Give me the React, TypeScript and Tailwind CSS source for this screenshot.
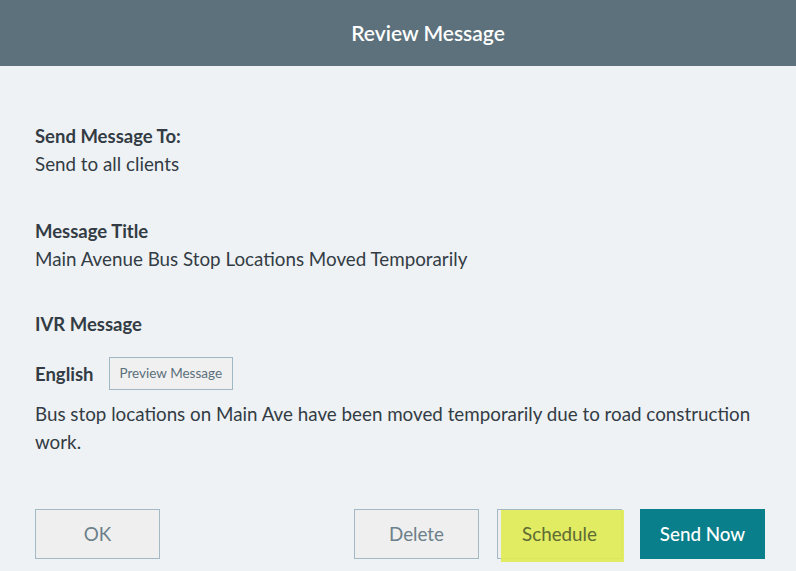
export default function App() {
  return (
    <div className="h-[571px] w-[796px] overflow-hidden bg-[#eef2f5] font-['Lato',sans-serif] text-[#333c44]">
      <header className="flex h-[66px] items-center justify-center bg-[#5c717b] pl-[60px]">
        <h1 className="text-[21px] font-semibold text-white">Review Message</h1>
      </header>

      <div className="pl-[35px] pr-[31px] pt-[56px]">
        <Field label="Send Message To:" value="Send to all clients" />
        <div className="mt-[39px]">
          <Field label="Message Title" value="Main Avenue Bus Stop Locations Moved Temporarily" />
        </div>

        <p className="mt-[37px] text-[18.5px] font-bold leading-[28px]">IVR Message</p>

        <div className="mt-[19px] flex items-center gap-[15px]">
          <span className="text-[18.5px] font-bold leading-[28px]">English</span>
          <button className="h-[33px] border border-[#9fb8c4] bg-[#f0f0f0] px-[10px] text-[13.5px] text-[#5a6f7a]">
            Preview Message
          </button>
        </div>

        <p className="mt-[10px] text-[18.8px] leading-[28px]">
          Bus stop locations on Main Ave have been moved temporarily due to road construction work.
        </p>

        <div className="mt-[53px] flex items-start">
          <ActionButton label="OK" />
          <div className="ml-auto flex gap-[18px]">
            <ActionButton label="Delete" />
            <div className="relative">
              <ActionButton label="Schedule" />
              <div className="pointer-events-none absolute left-[4px] top-[1px] h-[52px] w-[123px] bg-[#dfeb52]/90" />
              <span className="pointer-events-none absolute left-0 top-0 flex h-[50px] w-[125px] items-center justify-center text-[18.8px] text-[#5f6c35]">
                Schedule
              </span>
            </div>
            <button className="h-[50px] w-[125px] bg-[#087f8a] text-[18.8px] font-medium text-white">
              Send Now
            </button>
          </div>
        </div>
      </div>
    </div>
  );
}

function Field({ label, value }: { label: string; value: string }) {
  return (
    <div>
      <p className="text-[18.5px] font-bold leading-[28px]">{label}</p>
      <p className="text-[18.8px] leading-[28px]">{value}</p>
    </div>
  );
}

function ActionButton({ label }: { label: string }) {
  return (
    <button className="h-[50px] w-[125px] border border-[#a3bac5] bg-[#efefef] text-[18.8px] text-[#6c7f8a]">
      {label}
    </button>
  );
}
